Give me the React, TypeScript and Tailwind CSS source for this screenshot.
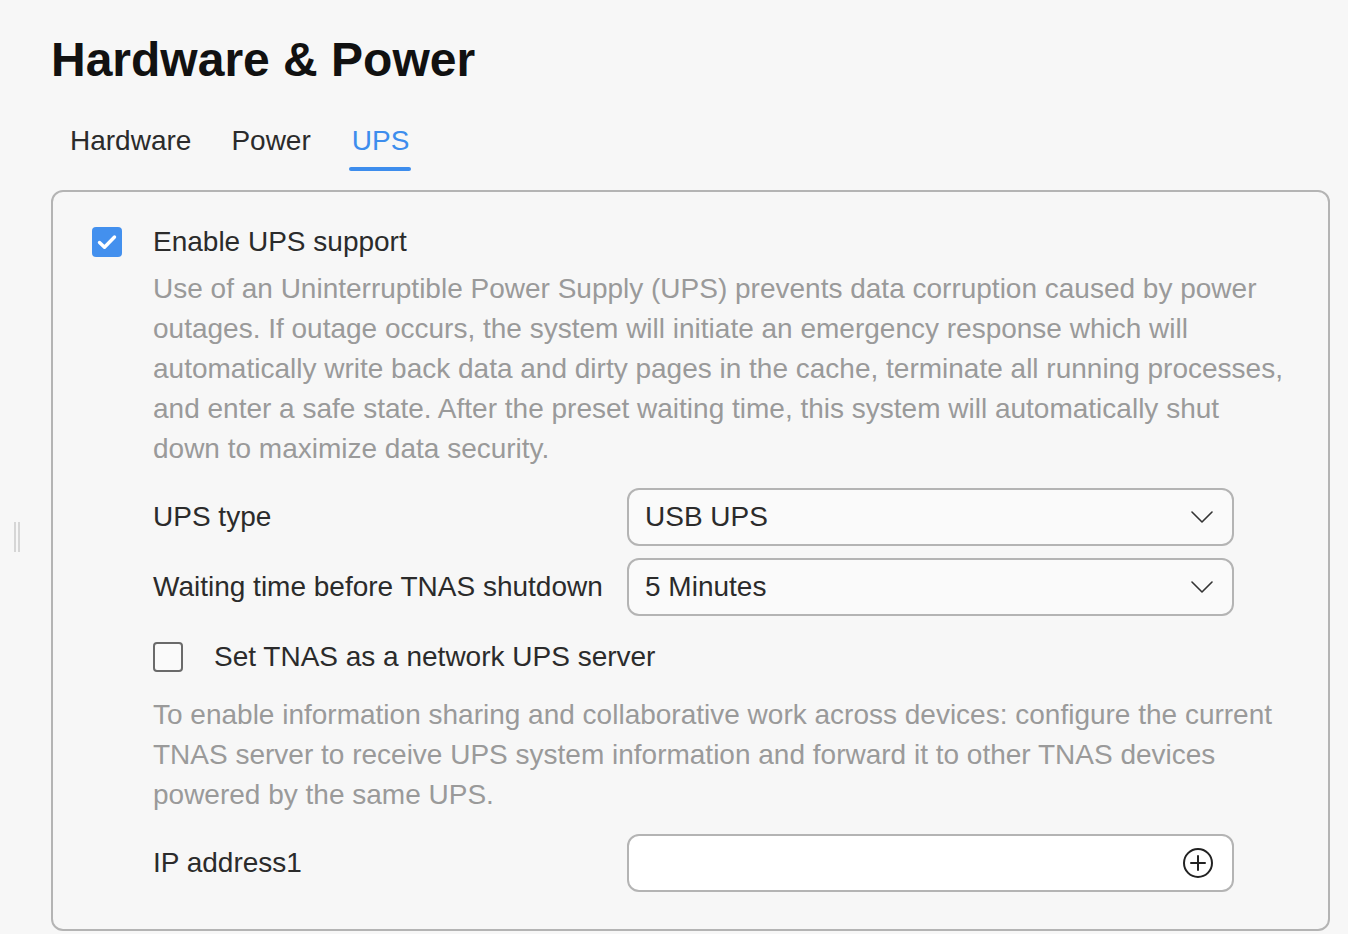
import React from 'react';

const ChevronDown: React.FC = () => (
  <svg width="22" height="12" viewBox="0 0 22 12" fill="none" className="shrink-0">
    <path d="M1 1l10 10L21 1" stroke="#333" strokeWidth="1.6" strokeLinecap="round" strokeLinejoin="round" />
  </svg>
);

const PlusCircle: React.FC = () => (
  <svg width="32" height="32" viewBox="0 0 32 32" fill="none" className="shrink-0">
    <circle cx="16" cy="16" r="14" stroke="#222" strokeWidth="2" />
    <path d="M16 9v14M9 16h14" stroke="#222" strokeWidth="2" strokeLinecap="round" />
  </svg>
);

const Select: React.FC<{ value: string }> = ({ value }) => (
  <div className="flex h-[58px] w-[607px] items-center justify-between rounded-[12px] border-2 border-[#b4b4b4] bg-[#fafafa] pl-[16px] pr-[19px] text-[28px] text-[#2b2b2b]">
    <span>{value}</span>
    <ChevronDown />
  </div>
);

const FormRow: React.FC<{ label: string; children: React.ReactNode }> = ({ label, children }) => (
  <div className="flex items-center">
    <div className="w-[474px] text-[28px] leading-[40px] text-[#2b2b2b]">{label}</div>
    {children}
  </div>
);

const App: React.FC = () => {
  return (
    <div
      className="relative h-[934px] w-[1348px] overflow-hidden bg-[#f7f7f7]"
      style={{ fontFamily: '"Liberation Sans", Arial, sans-serif' }}
    >
      {/* resize grip on the left edge */}
      <div className="absolute left-[14px] top-[522px] flex gap-[2px]">
        <div className="h-[30px] w-[2px] bg-[#d6d6d6]" />
        <div className="h-[30px] w-[2px] bg-[#d6d6d6]" />
      </div>

      <div className="pl-[51px] pt-[34px]">
        <h1 className="text-[48px] font-bold leading-[52px] text-[#111]">Hardware &amp; Power</h1>

        {/* Tabs */}
        <div className="mt-[35px] flex gap-[40px] pl-[19px] text-[28px] leading-[40px]">
          <div className="pb-[12px] text-[#2b2b2b]">Hardware</div>
          <div className="pb-[12px] text-[#2b2b2b]">Power</div>
          <div className="relative ml-[1px] pb-[12px] text-[#3d8ded]">
            UPS
            <div className="absolute -left-[3px] -right-[2px] bottom-[2px] h-[4px] rounded-full bg-[#3d8ded]" />
          </div>
        </div>

        <div className="mt-[17px] h-[741px] w-[1279px] rounded-[12px] border-2 border-[#b4b4b4] pl-[39px] pr-[40px] pt-[30px]">
          <div className="flex items-center gap-[31px]">
            <div className="flex h-[30px] w-[30px] items-center justify-center rounded-[4px] bg-[#4390ee]">
              <svg width="20" height="16" viewBox="0 0 20 16" fill="none">
                <path d="M2.5 8.5l5 4.8L17.5 3" stroke="#fff" strokeWidth="3.4" strokeLinecap="round" strokeLinejoin="round" />
              </svg>
            </div>
            <div className="text-[28px] leading-[40px] text-[#2b2b2b]">Enable UPS support</div>
          </div>

          <div className="pl-[61px]">
            <p className="mt-[7px] text-[28px] leading-[40px] text-[#9a9a9a]">
              Use of an Uninterruptible Power Supply (UPS) prevents data corruption caused by power outages. If outage
              occurs, the system will initiate an emergency response which will automatically write back data and dirty
              pages in the cache, terminate all running processes, and enter a safe state. After the preset waiting time,
              this system will automatically shut down to maximize data security.
            </p>

            <div className="mt-[19px] flex flex-col gap-[12px]">
              <FormRow label="UPS type">
                <Select value="USB UPS" />
              </FormRow>
              <FormRow label="Waiting time before TNAS shutdown">
                <Select value="5 Minutes" />
              </FormRow>
            </div>

            <div className="mt-[21px] flex items-center gap-[31px]">
              <div className="h-[30px] w-[30px] rounded-[4px] border-2 border-[#6a6a6a] bg-[#fafafa]" />
              <div className="text-[28px] leading-[40px] text-[#2b2b2b]">Set TNAS as a network UPS server</div>
            </div>

            <p className="mt-[18px] text-[28px] leading-[40px] text-[#9a9a9a]">
              To enable information sharing and collaborative work across devices: configure the current TNAS server to
              receive UPS system information and forward it to other TNAS devices powered by the same UPS.
            </p>

            <div className="mt-[19px]">
              <FormRow label="IP address1">
                <div className="flex h-[58px] w-[607px] items-center justify-end rounded-[12px] border-2 border-[#b4b4b4] bg-white pr-[18px]">
                  <PlusCircle />
                </div>
              </FormRow>
            </div>
          </div>
        </div>
      </div>
    </div>
  );
};

export default App;
